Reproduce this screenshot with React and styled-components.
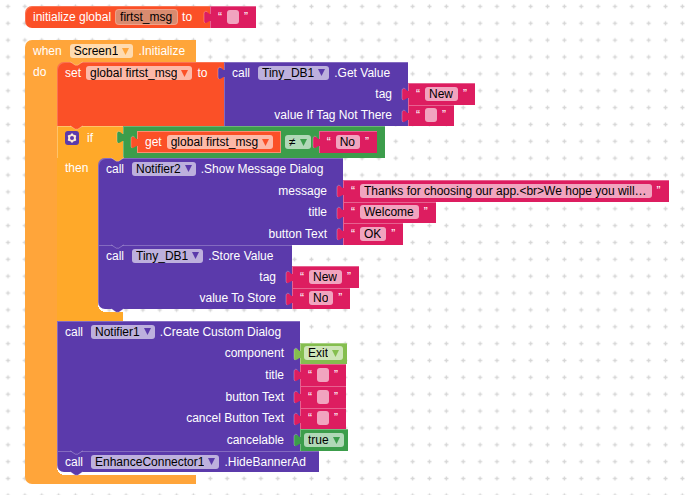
import React from "react";
import styled, { createGlobalStyle } from "styled-components";

const colors = {
  event: "#ffa53a",
  control: "#ffa929",
  variable: "#fb5027",
  method: "#5b3aab",
  text: "#dd1d60",
  logic: "#3c9d4b",
  component: "#85be4f",
};

const Plug = ({ color }) => (
  <PlugSvg viewBox="0 0 8 20" aria-hidden="true">
    <path
      d="M8,8 H6.5 L4.5,6.2 C2.4,4.6 1,5.8 1,8 V14.5 C1,17 2.4,17.8 4.5,16.3 L6.5,15 H8 z"
      fill={color}
    />
    <path
      d="M4.5,6 C2.4,4.4 1,5.6 1,8 V14.5 C1,16 1.4,16.8 2.2,17"
      fill="none"
      stroke="#fff"
      strokeOpacity="0.35"
      strokeWidth="0.8"
    />
  </PlugSvg>
);

const Notch = ({ color, offset = 0 }) => (
  <NotchSvg viewBox="0 -1 15 6" $offset={offset} aria-hidden="true">
    <path d="M0,-1 V0 l6,4 h3 l6,-4 V-1 z" fill={color} />
    <path
      d="M0,0 l6,4 h3 l6,-4"
      fill="none"
      stroke="#fff"
      strokeOpacity="0.35"
    />
  </NotchSvg>
);

const Dropdown = ({ id, value, label, color }) => (
  <PickField>
    <Select id={id} aria-label={label} defaultValue={value}>
      <option value={value}>{value}</option>
    </Select>
    <Caret viewBox="0 0 7 7" aria-hidden="true">
      <path d="M0,0 h7 l-3.5,7 z" fill={color} />
    </Caret>
  </PickField>
);

const TextBlock = ({ id, value = "", label }) => (
  <Value $color={colors.text}>
    <Plug color={colors.text} />
    <Quote>“</Quote>
    <Field>
      <Input id={id} aria-label={label} defaultValue={value} />
    </Field>
    <Quote>”</Quote>
  </Value>
);

const PickBlock = ({ id, value, color }) => (
  <Value $color={color} $tight>
    <Plug color={color} />
    <Dropdown id={id} value={value} color={color} />
  </Value>
);

const CallBlock = ({
  name,
  method,
  args = [],
  width,
  height,
  first,
  last,
  plug,
}) => (
  <Call $height={height}>
    <CallBody $width={width} $rows={args.length + 1} $first={first} $last={last}>
      {plug && <Plug color={colors.method} />}
      <Title>
        <span>call</span>
        <Dropdown
          value={name}
          label={`component for ${method}`}
          color={colors.method}
        />
        <Method>.{method}</Method>
      </Title>
      {args.map((arg) => (
        <ArgLabel key={arg.id} htmlFor={arg.id}>
          {arg.label}
        </ArgLabel>
      ))}
      {!plug && <Notch color={colors.method} />}
    </CallBody>
    {args.length > 0 && (
      <Args $rows={args.length + 1}>
        <span />
        {args.map((arg) =>
          arg.color ? (
            <PickBlock
              key={arg.id}
              id={arg.id}
              value={arg.value}
              color={arg.color}
            />
          ) : (
            <TextBlock key={arg.id} id={arg.id} value={arg.value} />
          )
        )}
      </Args>
    )}
  </Call>
);

const getValueArgs = [
  { id: "get-tag", label: "tag", value: "New" },
  { id: "get-default", label: "value If Tag Not There" },
];

const messageArgs = [
  {
    id: "msg-message",
    label: "message",
    value: "Thanks for choosing our app.<br>We hope you will…",
  },
  { id: "msg-title", label: "title", value: "Welcome" },
  { id: "msg-button", label: "button Text", value: "OK" },
];

const storeArgs = [
  { id: "store-tag", label: "tag", value: "New" },
  { id: "store-value", label: "value To Store", value: "No" },
];

const dialogArgs = [
  {
    id: "dlg-component",
    label: "component",
    value: "Exit",
    color: colors.component,
  },
  { id: "dlg-title", label: "title" },
  { id: "dlg-button", label: "button Text" },
  { id: "dlg-cancel", label: "cancel Button Text" },
  {
    id: "dlg-cancelable",
    label: "cancelable",
    value: "true",
    color: colors.logic,
  },
];

const App = () => {
  return (
    <Workspace>
      <GlobalStyle />
      <Dots aria-hidden="true">
        <defs>
          <pattern
            id="dots"
            x="-0.4"
            y="-2"
            width="16.86"
            height="16.86"
            patternUnits="userSpaceOnUse"
          >
            <path
              d="M6.4,8.43 h4 M8.4,6.43 v4"
              stroke="#d6d6d6"
              strokeWidth="1.4"
            />
          </pattern>
        </defs>
        <rect width="100%" height="100%" fill="url(#dots)" />
      </Dots>

      <Row>
        <Statement $color={colors.variable} $width={185} $first $last>
          <label htmlFor="global-name">initialize global</label>
          <NameField>
            <Input id="global-name" defaultValue="firtst_msg" />
          </NameField>
          <span>to</span>
        </Statement>
        <TextBlock label="initial value" />
      </Row>

      <EventBlock>
        <EventHead>
          <span>when</span>
          <Dropdown
            value="Screen1"
            label="event component"
            color={colors.event}
          />
          <Method>.Initialize</Method>
          <Notch color={colors.event} offset={32} />
        </EventHead>
        <Row>
          <Wall $color={colors.event} $width={32}>
            do
          </Wall>
          <Stack $color={colors.event}>
            <Row>
              <Statement $color={colors.variable} $width={167} $first>
                <span>set</span>
                <Dropdown
                  value="global firtst_msg"
                  label="variable to set"
                  color={colors.variable}
                />
                <span>to</span>
                <Notch color={colors.variable} />
              </Statement>
              <CallBlock
                plug
                name="Tiny_DB1"
                method="Get Value"
                args={getValueArgs}
                width={184}
                height={64}
              />
            </Row>

            <Row>
              <IfHead>
                <GearButton type="button" aria-label="if options">
                  <svg viewBox="0 0 14 14" width="14" height="14">
                    <path
                      d="M7,2.9 L8,4.2 L10.5,4.9 L10,7 L10.5,9.1 L8,9.8 L7,11.1 L6,9.8 L3.5,9.1 L4,7 L3.5,4.9 L6,4.2 z"
                      fill="#fdebd6"
                      stroke="#fdebd6"
                      strokeWidth="1.4"
                      strokeLinejoin="round"
                    />
                    <circle cx="7" cy="7" r="2" fill={colors.method} />
                  </svg>
                </GearButton>
                <span>if</span>
                <Notch color={colors.control} offset={41} />
              </IfHead>
              <Compare>
                <Plug color={colors.logic} />
                <GetBlock>
                  <Plug color={colors.variable} />
                  <span>get</span>
                  <Dropdown
                    value="global firtst_msg"
                    label="variable to get"
                    color={colors.variable}
                  />
                </GetBlock>
                <Dropdown value="≠" label="comparison" color={colors.logic} />
                <Operand>
                  <TextBlock value="No" label="compared text" />
                </Operand>
              </Compare>
            </Row>
            <Row>
              <Wall $color={colors.control} $width={41}>
                then
              </Wall>
              <Stack $color={colors.control}>
                <CallBlock
                  name="Notifier2"
                  method="Show Message Dialog"
                  args={messageArgs}
                  width={245}
                  height={87}
                  first
                />
                <CallBlock
                  name="Tiny_DB1"
                  method="Store Value"
                  args={storeArgs}
                  width={194}
                  height={64}
                  last
                />
              </Stack>
            </Row>
            <Foot $color={colors.control} $width={66} />

            <CallBlock
              name="Notifier1"
              method="Create Custom Dialog"
              args={dialogArgs}
              width={243}
              height={130}
            />
            <CallBlock
              name="EnhanceConnector1"
              method="HideBannerAd"
              width={262}
              height={21}
              last
            />
          </Stack>
        </Row>
        <Foot $color={colors.event} $width={171} $last />
      </EventBlock>
    </Workspace>
  );
};

const GlobalStyle = createGlobalStyle`
  * {
    box-sizing: border-box;
  }
  body {
    margin: 0;
    background-color: #fff;
  }
`;

const Workspace = styled.main`
  position: relative;
  display: flex;
  flex-direction: column;
  align-items: flex-start;
  gap: 12px;
  min-height: 100vh;
  padding: 6px 0 10px 25px;
  overflow: hidden;
  font-family: "Liberation Sans", Arial, sans-serif;
  font-size: 12px;
  line-height: 14px;
  color: #fff;
  white-space: nowrap;
`;

const Dots = styled.svg`
  position: absolute;
  inset: 0;
  width: 100%;
  height: 100%;
`;

const Row = styled.div`
  position: relative;
  display: flex;
  align-items: stretch;
`;

const Statement = styled.div`
  position: relative;
  display: flex;
  align-items: flex-start;
  gap: 5px;
  min-width: ${(props) => props.$width}px;
  padding: 4px 8px;
  background-color: ${(props) => props.$color};
  border-radius: ${(props) =>
    `${props.$first ? "7px" : "0"} 0 0 ${props.$last ? "7px" : "0"}`};
  box-shadow: inset 1px 1px 0 rgba(255, 255, 255, 0.2);
`;

const EventBlock = styled.section`
  position: relative;
`;

const EventHead = styled.header`
  position: relative;
  display: flex;
  align-items: center;
  gap: 8px;
  width: 171px;
  height: 22px;
  padding: 0 8px;
  background-color: ${colors.event};
  border-top-left-radius: 7px;
`;

const Wall = styled.div`
  width: ${(props) => props.$width}px;
  padding: 3px 8px;
  background-color: ${(props) => props.$color};
`;

const Stack = styled.div`
  position: relative;
  padding-bottom: 3px;

  /* rounded inner corners of the bracket */
  &::before,
  &::after {
    content: "";
    position: absolute;
    left: 0;
    width: 8px;
    height: 8px;
  }
  &::before {
    top: 0;
    background-color: ${(props) => props.$color};
  }
  &::after {
    bottom: 0;
    background: radial-gradient(
      circle at 8px 0,
      transparent 8px,
      ${(props) => props.$color} 8px
    );
  }
`;

const Foot = styled.div`
  width: ${(props) => props.$width}px;
  height: 9px;
  background-color: ${(props) => props.$color};
  border-bottom-left-radius: ${(props) => (props.$last ? "7px" : "0")};
`;

const IfHead = styled.div`
  position: relative;
  display: flex;
  align-items: flex-start;
  gap: 8px;
  width: 66px;
  height: 32px;
  padding: 5px 8px;
  background-color: ${colors.control};
  box-shadow: inset 1px 1px 0 rgba(255, 255, 255, 0.3);
`;

const GearButton = styled.button`
  width: 14px;
  height: 14px;
  padding: 0;
  border: 0;
  border-radius: 3px;
  background-color: ${colors.method};
  cursor: pointer;

  svg {
    display: block;
  }
`;

const Compare = styled.div`
  position: relative;
  display: flex;
  align-items: center;
  gap: 4px;
  padding: 0 8px 0 14px;
  background-color: ${colors.logic};
  box-shadow: inset 1px 1px 0 rgba(255, 255, 255, 0.25);
`;

const GetBlock = styled.div`
  position: relative;
  display: flex;
  align-items: center;
  gap: 5px;
  min-width: 144px;
  height: 22px;
  padding: 0 8px;
  background-color: ${colors.variable};
  box-shadow: inset 0 0 0 1px rgba(255, 255, 255, 0.35);
`;

const Operand = styled.div`
  display: flex;
  height: 22px;
  margin-left: 4px;
`;

const Call = styled.div`
  position: relative;
  display: flex;
  min-height: ${(props) => props.$height}px;
`;

const CallBody = styled.div`
  position: relative;
  display: grid;
  grid-template-rows: repeat(${(props) => props.$rows}, 1fr);
  align-items: center;
  min-width: ${(props) => props.$width}px;
  background-color: ${colors.method};
  border-radius: ${(props) =>
    `${props.$first ? "7px" : "0"} 0 0 ${props.$last ? "7px" : "0"}`};
  box-shadow: inset 1px 1px 0 rgba(255, 255, 255, 0.25);
`;

const Title = styled.div`
  display: flex;
  align-items: center;
  gap: 8px;
  padding: 0 8px;
`;

const Method = styled.span`
  margin-left: -3px;
`;

const ArgLabel = styled.label`
  padding-right: 16px;
  text-align: right;
`;

const Args = styled.div`
  display: grid;
  grid-template-rows: repeat(${(props) => props.$rows}, 1fr);
  justify-items: start;
`;

const Value = styled.div`
  position: relative;
  display: flex;
  align-items: center;
  gap: 5px;
  padding: ${(props) => (props.$tight ? "0 4px" : "0 8px")};
  background-color: ${(props) => props.$color};
  box-shadow: inset 1px 1px 0 rgba(255, 255, 255, 0.3);
`;

const Quote = styled.span`
  color: #fff;
`;

const Field = styled.span`
  display: flex;
  align-items: center;
  height: 14px;
  padding: 0 5px 0 4px;
  border-radius: 3px;
  background-color: rgba(255, 255, 255, 0.6);
  color: #000;
`;

const PickField = styled(Field)`
  gap: 4px;
  padding: 0 4px;
`;

const NameField = styled(Field)`
  background-color: #d98b6f;
  box-shadow: 0 0 0 1px #f0a088;
`;

const Input = styled.input`
  field-sizing: content;
  min-width: 3px;
  height: 14px;
  padding: 0;
  border: 0;
  outline: 0;
  background: transparent;
  color: inherit;
  font: inherit;
`;

const Select = styled.select`
  appearance: none;
  field-sizing: content;
  height: 14px;
  padding: 0;
  border: 0;
  outline: 0;
  background: transparent;
  color: inherit;
  font: inherit;
  cursor: pointer;
`;

const Caret = styled.svg`
  width: 7px;
  height: 7px;
  pointer-events: none;
`;

const PlugSvg = styled.svg`
  position: absolute;
  top: 0;
  left: -7px;
  z-index: 2;
  width: 8px;
  height: 20px;
`;

const NotchSvg = styled.svg`
  position: absolute;
  top: calc(100% - 1px);
  left: ${(props) => props.$offset + 13}px;
  z-index: 2;
  width: 13px;
  height: 5px;
`;

export default App;
